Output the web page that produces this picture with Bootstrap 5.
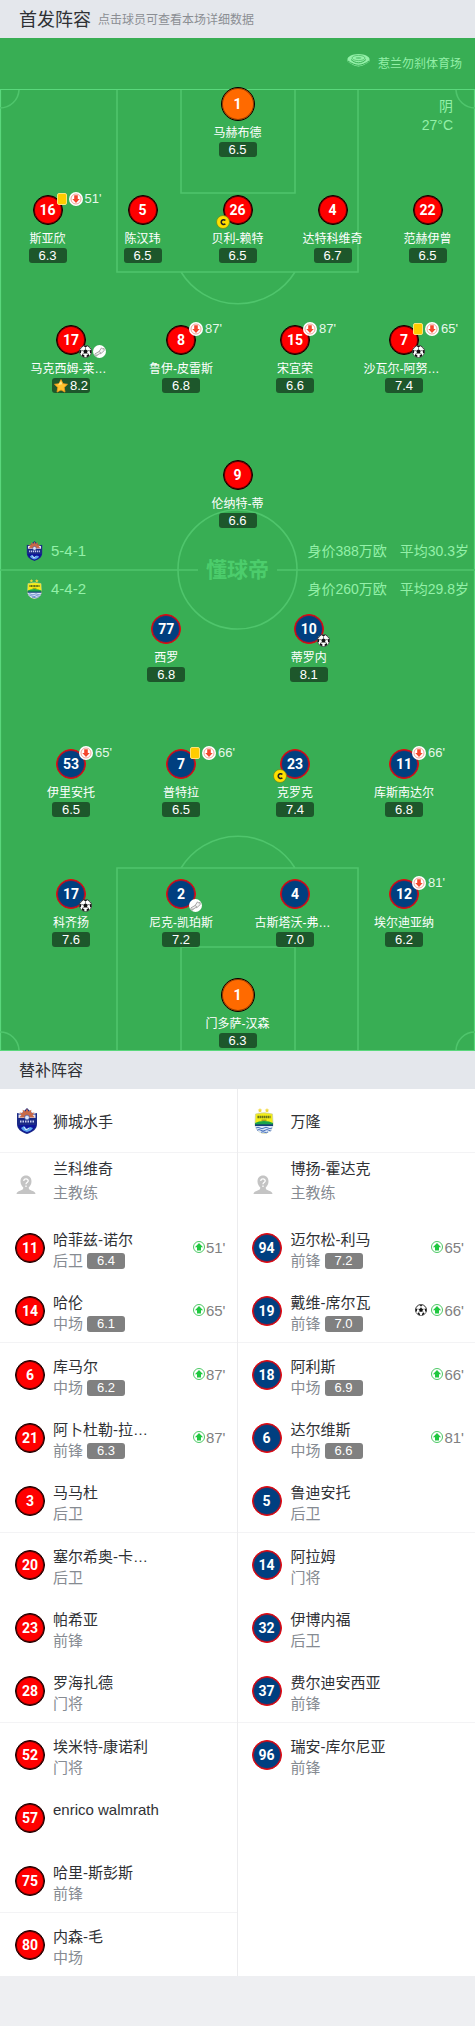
<!DOCTYPE html>
<html lang="zh-CN">
<head>
<meta charset="utf-8">
<meta name="viewport" content="width=device-width, initial-scale=1">
<title>首发阵容</title>
<link href="https://cdn.jsdelivr.net/npm/bootstrap@5.3.0/dist/css/bootstrap.min.css" rel="stylesheet">
<style>
body{font-family:"Liberation Sans","Noto Sans CJK SC",sans-serif;background:#eeeff2;color:#2f3135;font-size:15px;line-height:20px}
.bar{background:#e4e7ec;height:38px;padding:1px 20px 0 19px}
.bar h1{font-size:18px;font-weight:400;margin:0;line-height:24px}
.bar h2{font-size:16px;font-weight:400;margin:0;line-height:24px}
.bar .hint{font-size:12px;color:#8b8e93;margin-left:7px}
.pitch{background:#38ae54;color:#fff;padding-bottom:3px}
.pitch-lines{z-index:0}
.pitch>div{position:relative}
.soft{color:#93f0a8}
.venue{height:49px;font-size:12px;padding:2px 13px 0 0}
.weather{right:22px;top:59px;font-size:14px;line-height:19px;z-index:1}
.line5,.line4,.line2,.line1{display:grid}
.line1{grid-template-columns:1fr}
.line5{grid-template-columns:repeat(5,1fr)}
.line4{grid-template-columns:110fr 110fr 118fr 100fr;padding:0 21px 0 16px}
.line2{grid-template-columns:1fr 1fr;padding:0 20%}
.gap-s{margin-top:38px}.gap-m{margin-top:62px}.gap-l{margin-top:67px}.gap-xs{margin-top:31px}
.player{display:flex;flex-direction:column;align-items:center;min-width:0}
.shirt{width:30px;height:30px;border-radius:50%;background:#f00;border:1px solid #000;color:#fff;font:bold 14px/28px Roboto,sans-serif;text-align:center;position:relative;flex:none;box-shadow:inset 0 0 0 1px rgba(0,0,0,.6)}
.away{background:#003f80;border-color:#f00;box-shadow:inset 0 0 0 1px rgba(255,0,0,.6)}
.keeper{width:34px;height:34px;line-height:32px;background:#ff6a00;border-color:#000;box-shadow:inset 0 0 0 1px rgba(0,0,0,.4)}
.who{font-size:12px;line-height:18px;margin-top:5px;white-space:nowrap}
.who.cut{padding-right:5px}
.keeper+.who{margin-top:3px}
.score{width:38px;height:15px;line-height:15px;border-radius:3px;background:#1d572b;color:#fff;font-size:13px;display:flex;justify-content:center;align-items:center;gap:2px}
.ev-top,.ev-bot,.captain{position:absolute;display:flex;align-items:center;font:400 13px/14px "Liberation Sans",sans-serif}
.ev-top{left:22px;top:-4px;gap:2px;color:#e6f8ea}
.ev-bot{left:22px;top:19px;gap:1px}
.captain{left:-8px;top:19px}
.ycard{width:10px;height:12px;background:#fc0;border:1px solid #ffe27a;border-radius:2px;margin-left:1px}
.ico{width:14px;height:14px;flex:none;display:block}
.ev-bot .ico{width:13px;height:13px}
.strip{height:38px;padding:0 6px 0 26px;font-size:14px}
.strip .shape{font-size:15px}
.strip .age{margin-left:13px}
.strip .ico{width:17px;height:20px}
.mid{padding:4px 0 6px}
.brand{position:absolute;left:0;right:0;top:29px;text-align:center;font:bold 21px/22px "Noto Sans CJK SC",sans-serif;color:#4ccd6c}
.bench{background:#fff}
.bench ul{width:50%;margin:0;padding:0;list-style:none;min-width:0}
.bench ul:first-child{border-right:1px solid #ececee}
.bench li{height:63px;display:flex;padding:0 11px 0 15px}
.bench ul+ul li{padding-left:14px}
.bench li:nth-child(3n+1){height:64px;border-bottom:1px solid #f3f3f5}
.bench li:last-child{border-bottom:0}
.bench li .shirt{margin-top:17px}
.info{margin:13px 0 0 8px;flex:1;min-width:0}
.bench ul+ul .info{margin-left:9px}
.nm{line-height:21px;white-space:nowrap}
.role{color:#868b92;line-height:21px;display:flex;align-items:center;gap:4px}
.role .score{background:#808080;height:16px}
.team .nm{margin-top:9px}
.coach .info{margin-top:5px}
.coach .role{margin-top:3px}
.sub{margin-top:22px;color:#808080;height:20px;display:flex;align-items:center;gap:1px}
.sub .ico{width:12px;height:12px;margin-bottom:2px}
.sub .ball{margin-right:3px}
.crest{width:22px;height:26px;margin:19px 7px 0 1px;flex:none}
.face{width:20px;height:20px;margin:22px 9px 0 1px;flex:none}
.foot{height:50px}
</style>
</head>
<body>
<svg class="d-none" aria-hidden="true">
<symbol id="off" viewBox="0 0 14 14"><circle cx="7" cy="7" r="7" fill="#fff"/><circle cx="7" cy="7" r="5" fill="#fff" stroke="#f0a49a"/><path d="M5.200 3.300h3.600V7h1.900L7 11 3.300 7h1.900z" fill="#f5462c"/></symbol>
<symbol id="on" viewBox="0 0 12 12"><circle cx="6" cy="6" r="5.500" fill="#fff" stroke="#4cc864"/><path d="M4 9.600h4V6.200h2.100L6 1.900 1.900 6.200H4z" fill="#1fc83f"/></symbol>
<symbol id="ball" viewBox="0 0 14 14"><circle cx="7" cy="7" r="6.500" fill="#fff" stroke="#444" stroke-width=".8"/><path d="M7 4.500l2.400 1.700-.9 2.900h-3l-.9-2.900zM4.500.9h5L7 2.700zM.6 5l2 .8-.6 3-1.400.2zM13.400 5l-2 .8.6 3 1.400.2zM3 11.800l.5-2 2.400 1.500-.4 2zM11 11.800l-.5-2-2.400 1.500.4 2z" fill="#111"/><path d="M7 2.700v1.800M2.600 5.800l2 .4M11.400 5.800l-2 .4M3.500 9.800l2-.7M10.500 9.800l-2-.7M4.500.9L1.200 4.500M9.500.9l3.300 3.600" stroke="#222" stroke-width=".6" fill="none"/></symbol>
<symbol id="boot" viewBox="0 0 14 14"><circle cx="7" cy="7" r="7" fill="#fff"/><path d="M2.200 9.500L6.600 7l2.600-4 1.400 1.500 1.300-1 .2 2.500-3.500 3.200-2 .3-3.200 2.600-1.500-.8zM6.600 7l2 1.700M3.500 11.500l1-1.500" fill="#f4f4f4" stroke="#8a8a8a" stroke-width=".8"/></symbol>
<symbol id="cap" viewBox="0 0 14 14"><circle cx="7" cy="7" r="6.500" fill="#ffdf00" stroke="#6c8c1e" stroke-width=".8"/><path d="M9.300 5.500C8.600 4.600 5.200 4.100 5.200 7.100s3.300 2.600 4.100 1.600" fill="none" stroke="#222" stroke-width="1.600"/></symbol>
<symbol id="star" viewBox="0 0 14 14"><path d="M7 .6l2 4.100 4.500.6-3.300 3.100.8 4.700-4-2.200-4 2.200.8-4.700L.5 5.300 5 4.700z" fill="#ffc22e" stroke="#f59a1b" stroke-width=".8"/><path d="M7 2l1.300 3.300L4 6z" fill="#ffe680"/></symbol>
<symbol id="lion" viewBox="0 0 22 26"><path d="M1 5l4 1 3-3 3-3 3 3 3 3 4-1v11c0 5-4 8-10 10C5 24 1 21 1 16z" fill="#1a2a86"/><path d="M2.500 6.500H8l3 2 3-2h5.500V10h-17z" fill="#e6e4ef"/><path d="M11 .5l1.500 3 2.800-1.800-.2 3.200 3.400-.4-2 2.600 2.200 2.400H3.300l2.200-2.400-2-2.600 3.400.4-.2-3.200 2.800 1.800z" fill="#c86a48"/><circle cx="11" cy="9.500" r="2.400" fill="#dfe6f8" stroke="#384a9c" stroke-width=".7"/><path d="M4 13.500h14" stroke="#c9cfee" stroke-width="2" stroke-dasharray="1.500 1"/><path d="M2 17h18c-1 4-4 6-9 8-5-2-8-4-9-8z" fill="#0d149a"/><path d="M5 20l3-2 3 3 3-2 3 1c-1 2-3 3-6 4-3-1-5-2-6-4z" fill="#5aa4ea"/><path d="M8 19l2 3 3-2" stroke="#fff" stroke-width=".8" fill="none"/></symbol>
<symbol id="bandung" viewBox="0 0 22 26"><path d="M7 0l.7 1.500 1.600.2-1.200 1.100.3 1.700L7 3.700l-1.400.8.3-1.700-1.200-1.100 1.600-.2zM14 0l.7 1.500 1.600.2-1.200 1.100.3 1.700-1.400-.8-1.400.8.3-1.700-1.200-1.100 1.600-.2z" fill="#f1d83c"/><path d="M2.500 6Q11 3.500 19.500 6l.5 10c0 5-4 9-9 9.500C6 25 2 21 2 16z" fill="#f4ed16" stroke="#c9cda0" stroke-width=".7"/><path d="M4.500 9h13" stroke="#57651a" stroke-width="2.600" stroke-dasharray="1.400 .6"/><path d="M8.500 12.200h5" stroke="#96951b" stroke-width="1.200"/><path d="M2 15l4-1.500 5-.5 5 .5 4 1.500v2H2z" fill="#1aa54a"/><path d="M2 16.300h18v2.200H2z" fill="#173f78"/><path d="M2 18h18c-.5 4-4 7-9 7.500C6 25 2.500 22 2 18z" fill="#dce6f7"/><path d="M3 20q2-1.500 4 0t4 0 4 0 4 0M4 22.300q2-1.500 4 0t4 0 4 0 2 0M8 24.300q2-1 4 0t3-.5" stroke="#4b74bd" fill="none"/></symbol>
<symbol id="nobody" viewBox="0 0 20 20"><path d="M10 .5c3.500 0 5.500 2.500 5.500 6 0 2.700-1.500 4.700-2.800 6 0 1.800.6 2.200 3.300 3.200 2 .7 3.200 1.500 3.500 3.300H.5c.3-1.800 1.500-2.600 3.500-3.300 2.700-1 3.300-1.400 3.300-3.200-1.300-1.300-2.800-3.300-2.800-6 0-3.500 2-6 5.500-6z" fill="#c4c4c4"/><path d="M7.800 6c0-3 4.600-2.800 4.400 0-.2 1.700-2.200 1.500-2.200 3.300M10 10.500v1.500" stroke="#fff" stroke-width="1.300" fill="none"/></symbol>
</svg>

<header class="bar d-flex align-items-center"><h1>首发阵容</h1><span class="hint">点击球员可查看本场详细数据</span></header>

<main>
<section class="pitch position-relative">
<svg class="pitch-lines position-absolute top-0 start-0 w-100 h-100" viewBox="0 38 475 1013" preserveAspectRatio="none" fill="none" stroke="#4fc56c" stroke-width="1.600" aria-hidden="true">
<path d="M.5 89.500h474v961H.5z" stroke="#5ad77c" stroke-width="1.200"/>
<path d="M117 90v182h241V90M181 90v103h114V90M181 272a67 67 0 0 0 114 0M0 108a19 19 0 0 0 19-18M475 108a19 19 0 0 1-19-18M117 1050V868h241v182M181 1050V947h114v103M181 868a67 67 0 0 1 114 0M0 1032a19 19 0 0 1 19 18M475 1032a19 19 0 0 0-19 18M0 570h198M277 570h198"/>
<circle cx="237.500" cy="569.500" r="59.500"/>
</svg>
<div class="venue soft d-flex justify-content-end align-items-center">
<svg width="23" height="14" viewBox="0 0 23 14" class="me-2 mb-2" aria-hidden="true"><path d="M.5 6.500C0 4 5 1 11.500 1s11.500 3 11 5.500v1.800C21 10.500 14 13.500 11.500 13.500S2 10.500.5 8.300z" fill="#93f0a8"/><path d="M1 8c3 2.500 7.500 4.300 10.500 4.300S19 10.500 22 8M4 6.500c2.500 2.300 5 3.300 7.500 3.300s5-1 7.500-3.300" stroke="#38ae54" fill="none"/><ellipse cx="11.500" cy="5" rx="6.500" ry="2.600" fill="none" stroke="#38ae54" stroke-width=".6"/><ellipse cx="11.500" cy="5" rx="3" ry="1" fill="#38ae54" opacity=".5"/></svg>
<span>惹兰勿刹体育场</span></div>
<div class="weather soft position-absolute text-end">阴<br>27°C</div>

<div class="line1"><div class="player"><div class="shirt keeper">1</div><div class="who">马赫布德</div><div class="score">6.5</div></div></div>

<div class="line5 gap-s">
<div class="player"><div class="shirt">16<span class="ev-top"><i class="ycard"></i><svg class="ico"><use href="#off"/></svg>51'</span></div><div class="who">斯亚欣</div><div class="score">6.3</div></div>
<div class="player"><div class="shirt">5</div><div class="who">陈汉玮</div><div class="score">6.5</div></div>
<div class="player"><div class="shirt">26<span class="captain"><svg class="ico"><use href="#cap"/></svg></span></div><div class="who">贝利-赖特</div><div class="score">6.5</div></div>
<div class="player"><div class="shirt">4</div><div class="who">达特科维奇</div><div class="score">6.7</div></div>
<div class="player"><div class="shirt">22</div><div class="who">范赫伊曾</div><div class="score">6.5</div></div>
</div>

<div class="line4 gap-m">
<div class="player"><div class="shirt">17<span class="ev-bot"><svg class="ico"><use href="#ball"/></svg><svg class="ico"><use href="#boot"/></svg></span></div><div class="who cut">马克西姆-莱…</div><div class="score"><svg class="ico"><use href="#star"/></svg>8.2</div></div>
<div class="player"><div class="shirt">8<span class="ev-top"><svg class="ico"><use href="#off"/></svg>87'</span></div><div class="who">鲁伊-皮雷斯</div><div class="score">6.8</div></div>
<div class="player"><div class="shirt">15<span class="ev-top"><svg class="ico"><use href="#off"/></svg>87'</span></div><div class="who">宋宜荣</div><div class="score">6.6</div></div>
<div class="player"><div class="shirt">7<span class="ev-top"><i class="ycard"></i><svg class="ico"><use href="#off"/></svg>65'</span><span class="ev-bot"><svg class="ico"><use href="#ball"/></svg></span></div><div class="who cut">沙瓦尔-阿努…</div><div class="score">7.4</div></div>
</div>

<div class="line1 gap-l"><div class="player"><div class="shirt">9</div><div class="who">伦纳特-蒂</div><div class="score">6.6</div></div></div>

<div class="mid soft">
<div class="strip d-flex align-items-center"><svg class="ico me-2"><use href="#lion"/></svg><span class="shape">5-4-1</span><span class="ms-auto">身价388万欧</span><span class="age">平均30.3岁</span></div>
<div class="strip d-flex align-items-center"><svg class="ico me-2"><use href="#bandung"/></svg><span class="shape">4-4-2</span><span class="ms-auto">身价260万欧</span><span class="age">平均29.8岁</span></div>
<div class="brand">懂球帝</div>
</div>

<div class="line2">
<div class="player"><div class="shirt away">77</div><div class="who">西罗</div><div class="score">6.8</div></div>
<div class="player"><div class="shirt away">10<span class="ev-bot"><svg class="ico"><use href="#ball"/></svg></span></div><div class="who">蒂罗内</div><div class="score">8.1</div></div>
</div>

<div class="line4 gap-l">
<div class="player"><div class="shirt away">53<span class="ev-top"><svg class="ico"><use href="#off"/></svg>65'</span></div><div class="who">伊里安托</div><div class="score">6.5</div></div>
<div class="player"><div class="shirt away">7<span class="ev-top"><i class="ycard"></i><svg class="ico"><use href="#off"/></svg>66'</span></div><div class="who">普特拉</div><div class="score">6.5</div></div>
<div class="player"><div class="shirt away">23<span class="captain"><svg class="ico"><use href="#cap"/></svg></span></div><div class="who">克罗克</div><div class="score">7.4</div></div>
<div class="player"><div class="shirt away">11<span class="ev-top"><svg class="ico"><use href="#off"/></svg>66'</span></div><div class="who">库斯南达尔</div><div class="score">6.8</div></div>
</div>

<div class="line4 gap-m">
<div class="player"><div class="shirt away">17<span class="ev-bot"><svg class="ico"><use href="#ball"/></svg></span></div><div class="who">科齐扬</div><div class="score">7.6</div></div>
<div class="player"><div class="shirt away">2<span class="ev-bot"><svg class="ico"><use href="#boot"/></svg></span></div><div class="who">尼克-凯珀斯</div><div class="score">7.2</div></div>
<div class="player"><div class="shirt away">4</div><div class="who cut">古斯塔沃-弗…</div><div class="score">7.0</div></div>
<div class="player"><div class="shirt away">12<span class="ev-top"><svg class="ico"><use href="#off"/></svg>81'</span></div><div class="who">埃尔迪亚纳</div><div class="score">6.2</div></div>
</div>

<div class="line1 gap-xs"><div class="player"><div class="shirt keeper">1</div><div class="who">门多萨-汉森</div><div class="score">6.3</div></div></div>
</section>

<div class="bar d-flex align-items-center"><h2>替补阵容</h2></div>

<section class="bench d-flex">
<ul>
<li class="team"><svg class="crest"><use href="#lion"/></svg><div class="info"><div class="nm">狮城水手</div></div></li>
<li class="coach"><svg class="face"><use href="#nobody"/></svg><div class="info"><div class="nm">兰科维奇</div><div class="role">主教练</div></div></li>
<li><div class="shirt">11</div><div class="info"><div class="nm">哈菲兹-诺尔</div><div class="role">后卫<span class="score">6.4</span></div></div><div class="sub"><svg class="ico"><use href="#on"/></svg>51'</div></li>
<li><div class="shirt">14</div><div class="info"><div class="nm">哈伦</div><div class="role">中场<span class="score">6.1</span></div></div><div class="sub"><svg class="ico"><use href="#on"/></svg>65'</div></li>
<li><div class="shirt">6</div><div class="info"><div class="nm">库马尔</div><div class="role">中场<span class="score">6.2</span></div></div><div class="sub"><svg class="ico"><use href="#on"/></svg>87'</div></li>
<li><div class="shirt">21</div><div class="info"><div class="nm">阿卜杜勒-拉…</div><div class="role">前锋<span class="score">6.3</span></div></div><div class="sub"><svg class="ico"><use href="#on"/></svg>87'</div></li>
<li><div class="shirt">3</div><div class="info"><div class="nm">马马杜</div><div class="role">后卫</div></div></li>
<li><div class="shirt">20</div><div class="info"><div class="nm">塞尔希奥-卡…</div><div class="role">后卫</div></div></li>
<li><div class="shirt">23</div><div class="info"><div class="nm">帕希亚</div><div class="role">前锋</div></div></li>
<li><div class="shirt">28</div><div class="info"><div class="nm">罗海扎德</div><div class="role">门将</div></div></li>
<li><div class="shirt">52</div><div class="info"><div class="nm">埃米特-康诺利</div><div class="role">门将</div></div></li>
<li><div class="shirt">57</div><div class="info"><div class="nm">enrico walmrath</div></div></li>
<li><div class="shirt">75</div><div class="info"><div class="nm">哈里-斯彭斯</div><div class="role">前锋</div></div></li>
<li><div class="shirt">80</div><div class="info"><div class="nm">内森-毛</div><div class="role">中场</div></div></li>
</ul>
<ul>
<li class="team"><svg class="crest"><use href="#bandung"/></svg><div class="info"><div class="nm">万隆</div></div></li>
<li class="coach"><svg class="face"><use href="#nobody"/></svg><div class="info"><div class="nm">博扬-霍达克</div><div class="role">主教练</div></div></li>
<li><div class="shirt away">94</div><div class="info"><div class="nm">迈尔松-利马</div><div class="role">前锋<span class="score">7.2</span></div></div><div class="sub"><svg class="ico"><use href="#on"/></svg>65'</div></li>
<li><div class="shirt away">19</div><div class="info"><div class="nm">戴维-席尔瓦</div><div class="role">前锋<span class="score">7.0</span></div></div><div class="sub"><svg class="ico ball"><use href="#ball"/></svg><svg class="ico"><use href="#on"/></svg>66'</div></li>
<li><div class="shirt away">18</div><div class="info"><div class="nm">阿利斯</div><div class="role">中场<span class="score">6.9</span></div></div><div class="sub"><svg class="ico"><use href="#on"/></svg>66'</div></li>
<li><div class="shirt away">6</div><div class="info"><div class="nm">达尔维斯</div><div class="role">中场<span class="score">6.6</span></div></div><div class="sub"><svg class="ico"><use href="#on"/></svg>81'</div></li>
<li><div class="shirt away">5</div><div class="info"><div class="nm">鲁迪安托</div><div class="role">后卫</div></div></li>
<li><div class="shirt away">14</div><div class="info"><div class="nm">阿拉姆</div><div class="role">门将</div></div></li>
<li><div class="shirt away">32</div><div class="info"><div class="nm">伊博内福</div><div class="role">后卫</div></div></li>
<li><div class="shirt away">37</div><div class="info"><div class="nm">费尔迪安西亚</div><div class="role">前锋</div></div></li>
<li><div class="shirt away">96</div><div class="info"><div class="nm">瑞安-库尔尼亚</div><div class="role">前锋</div></div></li>
</ul>
</section>
</main>
<div class="foot"></div>
<script src="https://cdn.jsdelivr.net/npm/bootstrap@5.3.0/dist/js/bootstrap.bundle.min.js"></script>
</body>
</html>
